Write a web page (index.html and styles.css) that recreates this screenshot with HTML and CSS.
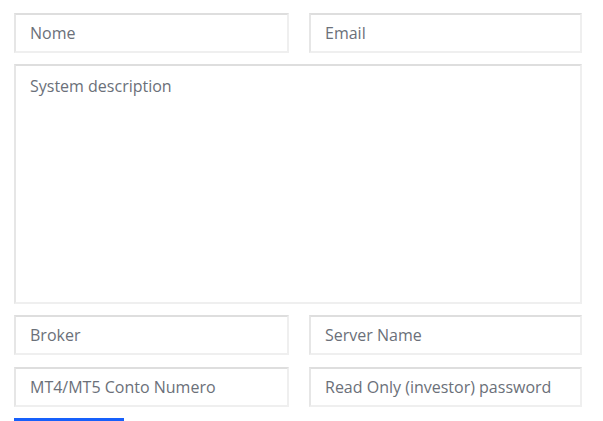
FILE: index.html
```html
<html>
    <head>
        <title>Sistema</title>
        <link rel="stylesheet" href="styles.css">
    </head>
    <body>
        <form class="system-form">
            <div class="row">
                <input class="field" type="text" placeholder="Nome">
                <input class="field" type="email" placeholder="Email">
            </div>
            <textarea class="field description" placeholder="System description"></textarea>
            <div class="row">
                <input class="field" type="text" placeholder="Broker">
                <input class="field" type="text" placeholder="Server Name">
            </div>
            <div class="row">
                <input class="field" type="text" placeholder="MT4/MT5 Conto Numero">
                <input class="field" type="password" placeholder="Read Only (investor) password">
            </div>
            <!-- top edge of the submit button -->
            <div class="submit-bar"></div>
        </form>
    </body>
</html>
```

FILE: styles.css
```css
body {
    margin: 0;
    padding: 13px 21px 0 14px;
    background: #fff;
    font-family: "Open Sans", sans-serif;
    overflow: hidden;
}

.system-form {
    display: flex;
    flex-direction: column;
    gap: 11px;
}

.row {
    display: grid;
    grid-template-columns: 275px 273px;
    gap: 20px;
}

.field {
    box-sizing: border-box;
    width: 100%;
    height: 40px;
    margin: 0;
    padding: 0 14px;
    border: 2px solid #efefef;
    border-top-color: #dedede;
    border-left-color: #e6e6e6;
    background: #fff;
    font-family: "Open Sans", sans-serif;
    font-size: 16px;
    color: #6b7079;
    outline: none;
}

.field::placeholder {
    color: #6b7079;
    opacity: 1;
}

.description {
    height: 240px;
    padding-top: 9px;
    resize: none;
}

.row + .row {
    margin-top: 1px;
}

.submit-bar {
    width: 110px;
    height: 3px;
    background: #1760fb;
}
```
